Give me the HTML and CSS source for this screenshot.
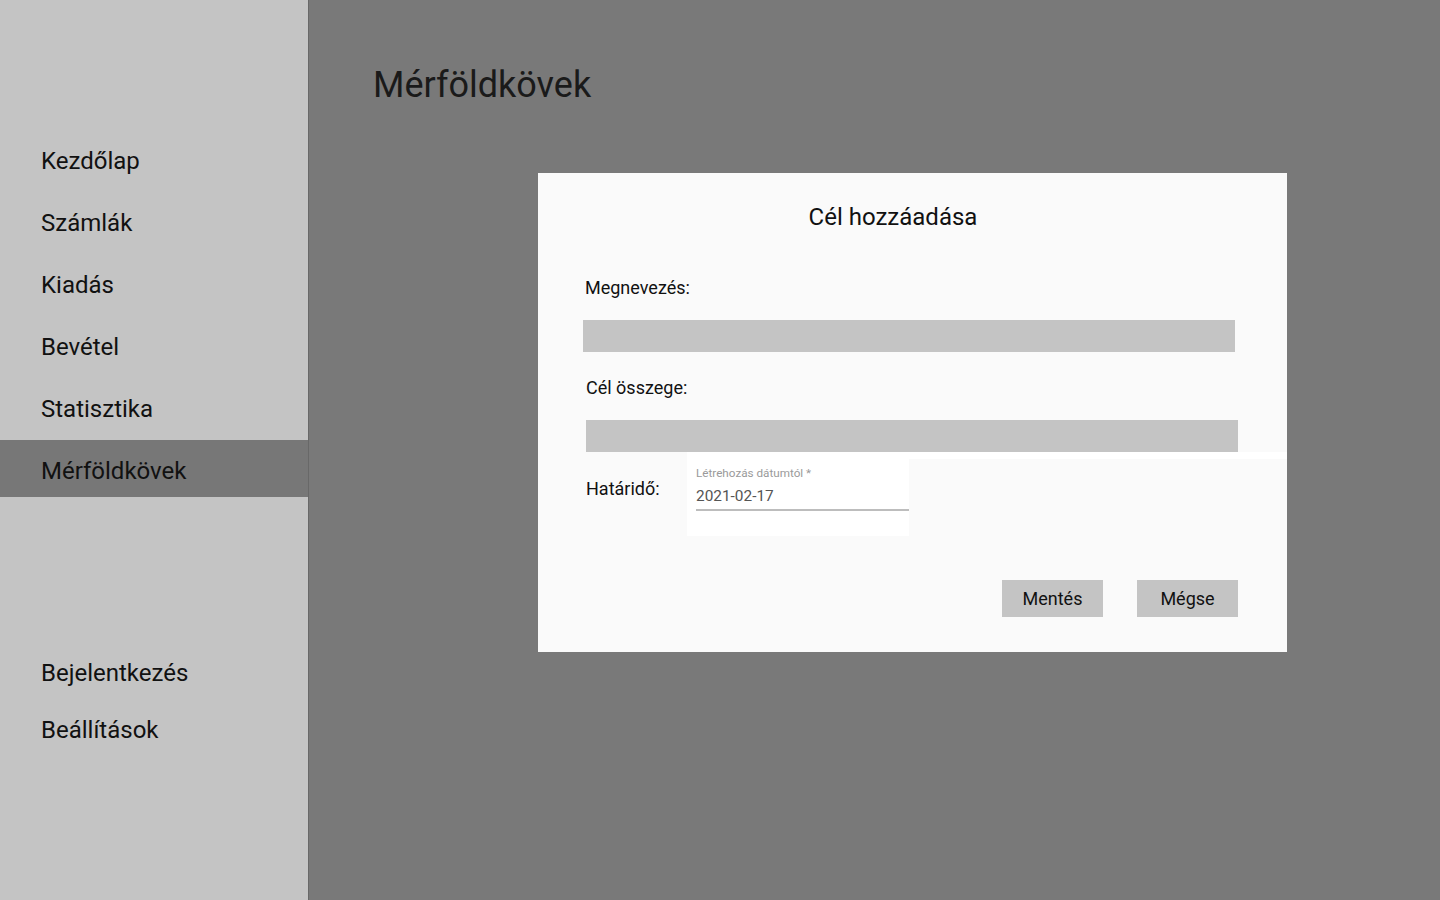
FILE: index.html
```html
<!DOCTYPE html>
<html lang="hu">
<head>
<meta charset="utf-8">
<title>Mérföldkövek</title>
<link rel="stylesheet" href="styles.css">
</head>
<body>
<div class="app">
  <aside class="sidebar">
    <nav class="nav nav-top">
      <a class="nav-item">Kezdőlap</a>
      <a class="nav-item">Számlák</a>
      <a class="nav-item">Kiadás</a>
      <a class="nav-item">Bevétel</a>
      <a class="nav-item">Statisztika</a>
      <a class="nav-item active">Mérföldkövek</a>
    </nav>
    <nav class="nav nav-bottom">
      <a class="nav-item">Bejelentkezés</a>
      <a class="nav-item">Beállítások</a>
    </nav>
  </aside>
  <main class="main">
    <h1 class="page-title">Mérföldkövek</h1>
    <section class="modal">
      <h2 class="modal-title">Cél hozzáadása</h2>
      <label class="field-label label-name">Megnevezés:</label>
      <div class="input input-name"></div>
      <label class="field-label label-amount">Cél összege:</label>
      <div class="input input-amount"></div>
      <div class="date-row">
        <label class="field-label label-date">Határidő:</label>
        <div class="date-wrap">
          <div class="date-strip"></div>
          <div class="date-box">
            <div class="date-caption">Létrehozás dátumtól *</div>
            <div class="date-value">2021-02-17</div>
          </div>
        </div>
      </div>
      <div class="actions">
        <button class="btn">Mentés</button>
        <button class="btn">Mégse</button>
      </div>
    </section>
  </main>
</div>
</body>
</html>
```

FILE: styles.css
```css
* { box-sizing: border-box; }
html, body { margin: 0; padding: 0; }
body {
  font-family: Roboto, "Liberation Sans", sans-serif;
  color: #111;
  width: 1440px;
  height: 900px;
  overflow: hidden;
}
.app {
  display: flex;
  height: 900px;
}
.sidebar {
  width: 309px;
  flex: none;
  background: #c4c4c4;
  border-right: 1px solid #686868;
  display: flex;
  flex-direction: column;
}
.nav {
  display: flex;
  flex-direction: column;
}
.nav-top {
  padding-top: 130px;
  gap: 5px;
}
.nav-bottom {
  margin-top: 145px;
}
.nav-item {
  display: block;
  height: 57px;
  padding: 5px 0 0 41px;
  font-size: 24px;
  line-height: 52px;
  color: #111;
}
.nav-item.active {
  background: #777777;
}
.main {
  flex: 1;
  background: #797979;
  padding-left: 64px;
}
.page-title {
  margin: 0;
  padding-top: 64px;
  font-size: 36px;
  font-weight: 400;
  line-height: 42px;
  color: #1a1a1a;
}
.modal {
  margin: 67px 0 0 165px;
  width: 749px;
  height: 479px;
  background: #fafafa;
  padding: 30px 49px 0 45px;
}
.modal-title {
  margin: 0;
  font-size: 24px;
  font-weight: 400;
  line-height: 28px;
  text-align: center;
  padding-right: 35px;
  color: #111;
}
.field-label {
  display: block;
  font-size: 18px;
  line-height: 22px;
  color: #111;
}
.label-name { margin: 46px 0 0 2px; }
.input {
  height: 32px;
  width: 652px;
  background: #c4c4c4;
}
.input-name { margin-top: 21px; }
.label-amount { margin: 25px 0 0 3px; }
.input-amount { margin: 21px 0 0 3px; }
.date-row {
  display: flex;
  align-items: flex-start;
  padding-left: 3px;
}
.label-date {
  width: 101px;
  flex: none;
  margin-top: 26px;
}
.date-wrap {
  width: 600px;
  flex: none;
}
.date-strip {
  height: 7px;
  background: #ffffff;
}
.date-box {
  width: 222px;
  height: 77px;
  background: #ffffff;
  padding: 8px 0 0 9px;
}
.date-caption {
  font-size: 11.7px;
  line-height: 13px;
  color: #9a9a9a;
}
.date-value {
  margin-top: 7px;
  font-size: 15.4px;
  line-height: 18px;
  color: #555;
  padding-bottom: 4px;
  border-bottom: 2px solid #bdbdbd;
}
.actions {
  display: flex;
  justify-content: flex-end;
  gap: 34px;
  margin-top: 44px;
}
.btn {
  width: 101px;
  height: 37px;
  border: none;
  background: #c4c4c4;
  font-family: Roboto, "Liberation Sans", sans-serif;
  font-size: 18px;
  line-height: 37px;
  padding: 0;
  color: #111;
}
```
